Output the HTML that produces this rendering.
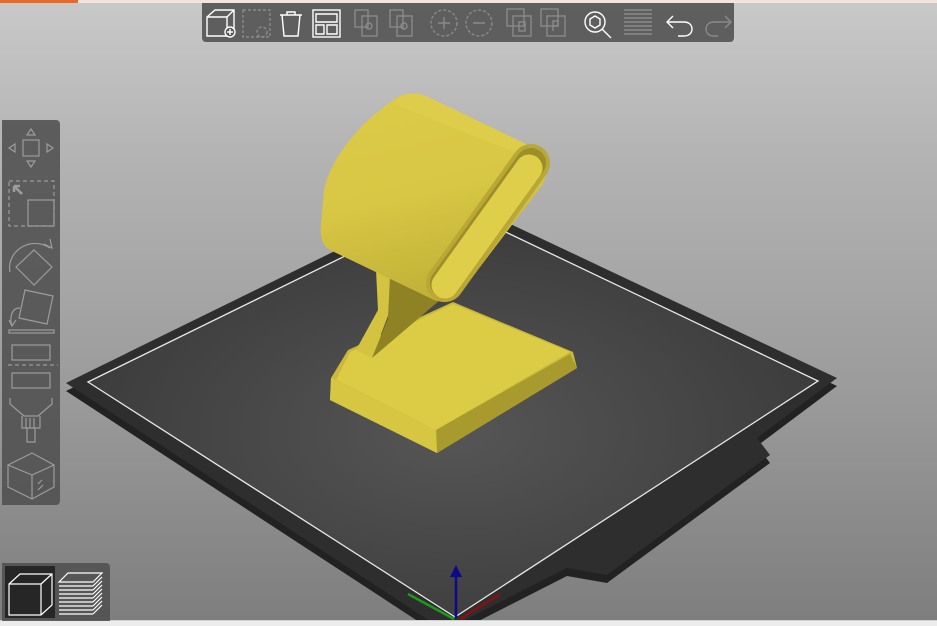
<!DOCTYPE html>
<html><head><meta charset="utf-8"><style>
html,body{margin:0;padding:0}
body{width:937px;height:625px;overflow:hidden;position:relative;background:linear-gradient(#c9c9c9 0px,#b4b4b4 150px,#9a9a9a 400px,#7e7e7e 620px);font-family:"Liberation Sans",sans-serif}
.tb{position:absolute;background:rgba(80,80,80,0.88)}
svg{position:absolute;left:0;top:0}
</style></head><body>
<div style="position:absolute;left:0;top:0;width:937px;height:3px;background:#f5e4dc"></div>
<div style="position:absolute;left:0;top:0;width:78px;height:3px;background:#e8692a"></div>

<svg width="937" height="625" viewBox="0 0 937 625">
<defs>
<radialGradient id="bed" cx="0.5" cy="0.55" r="0.6"><stop offset="0" stop-color="#565656"/><stop offset="1" stop-color="#383838"/></radialGradient>
<linearGradient id="ring" x1="0" y1="0" x2="0.25" y2="1"><stop offset="0" stop-color="#dccb47"/><stop offset="0.55" stop-color="#d8c744"/><stop offset="1" stop-color="#c2b238"/></linearGradient>
</defs>
<path d="M66,391 L449,203 L837,386 L757,446 L770,463 L607,583 L567,576 L455,633 L436,633 Z" fill="#222"/>
<path d="M66,383 L449,195 L837,378 L757,438 L770,455 L607,575 L567,568 L455,625 L436,625 Z" fill="#2e2e2e"/>
<path d="M88,382 L449,205 L818,381 L455,617 Z" fill="url(#bed)"/>
<path d="M88,382 L449,205 L818,381 L455,617 Z" fill="none" stroke="#e8e8e8" stroke-width="1.3"/>
<line x1="456" y1="618" x2="456" y2="572" stroke="#0a0a8a" stroke-width="2.5"/>
<path d="M450,577 L456,565 L462,577 Z" fill="#0a0a8a"/>
<line x1="454" y1="619" x2="408" y2="594" stroke="#1c9a1c" stroke-width="2.5"/>
<line x1="460" y1="619" x2="500" y2="594" stroke="#8a1010" stroke-width="2.5"/>

<path d="M348,350 L453,302 L573,352 L577,368 L437,453 L330,400 L331,378 Z" fill="#c9b83a"/>
<path d="M350,352 L453,304 L570,352 L436,430 L336,380 Z" fill="#dccb45"/>
<path d="M436,430 L570,354 L577,368 L437,453 Z" fill="#a89a2c"/>
<path d="M331,378 L436,430 L437,453 L330,400 Z" fill="#d6c642"/>
<path d="M376,270 L392,276 L394,300 L372,358 L356,350 L378,310 Z" fill="#d4c340"/>
<path d="M390,276 L440,292 L440,300 L372,358 L388,318 Z" fill="#8e8224"/>

<path d="M400,96 C410,92 418,93 428,97 L528,145 C548,155 552,170 540,188 L458,296 C450,304 440,303 430,298 L330,250 C322,245 320,238 321,225 L324,190 C330,160 360,120 400,96 Z" fill="url(#ring)"/>
<path d="M400,96 C410,92 418,93 428,97 L528,145 L515,152 C470,135 430,118 395,104 Z" fill="#e0cf4c" opacity="0.7"/>
<line x1="531" y1="163" x2="445" y2="283" stroke="#b9a835" stroke-width="38" stroke-linecap="round"/>
<line x1="531" y1="163" x2="445" y2="283" stroke="#9c8f28" stroke-width="30" stroke-linecap="round"/>
<line x1="529" y1="168" x2="445" y2="285" stroke="#dfce4a" stroke-width="27" stroke-linecap="round"/>
</svg>

<div style="position:absolute;left:0;top:620px;width:937px;height:5px;background:#ececec;border-top:1px solid #d0d0d0"></div>

<div class="tb" style="left:202px;top:3px;width:532px;height:39px;border-radius:0 0 4px 4px"></div>
<svg width="937" height="50" viewBox="0 0 937 50" style="z-index:2" fill="none" stroke-width="1.4">
<g stroke="#fff">
<path d="M207,17 L215,10 L234,10 L234,30 L227,36 L207,36 Z M207,17 L227,17 L227,36 M227,17 L234,10"/>
<circle cx="230" cy="32" r="5" fill="#555"/><path d="M227,32h6M230,29v6"/>
<path d="M280,15 h22 M287,15 v-3 h8 v3 M282,15 l2,21 h14 l2,-21"/>
<rect x="313" y="10" width="27" height="27"/><path d="M316,14 h21 v8 h-21 Z M316,25 h8 v9 h-8 Z M327,25 h10 v9 h-10 Z"/>
<circle cx="595" cy="22" r="10"/><path d="M602,29 l9,9 M595,16 l5,3 v6 l-5,3 l-5,-3 v-6 Z"/>
<path d="M668,22 h16 c5,0 8,3 8,7 c0,4 -3,7 -8,7 h-6 M673,16 l-6,6 l6,6"/>
</g>
<g stroke="#8a8a8a" stroke-dasharray="3,2"><rect x="243" y="10" width="27" height="27"/><circle cx="262" cy="32" r="5"/><circle cx="444" cy="23" r="13"/><circle cx="479" cy="23" r="13"/></g>
<g stroke="#8a8a8a">
<rect x="355" y="10" width="13" height="17"/><rect x="362" y="16" width="15" height="20"/><circle cx="369" cy="26" r="3"/>
<rect x="390" y="10" width="13" height="17"/><rect x="397" y="16" width="15" height="20"/><circle cx="404" cy="26" r="3"/>
<path d="M438,23h12M444,17v12M473,23h12"/>
<rect x="507" y="9" width="17" height="17"/><rect x="513" y="16" width="18" height="20"/><rect x="519" y="22" width="6" height="9"/>
<rect x="541" y="9" width="17" height="17"/><rect x="547" y="16" width="18" height="20"/><path d="M553,31v-10h5v5h-5"/>
<path d="M624,10h28M624,14h28M624,18h28M624,22h28M624,26h28M624,30h28M624,34h28"/>
<path d="M730,22 h-16 c-5,0 -8,3 -8,7 c0,4 3,7 8,7 h4 M725,16 l6,6 l-6,6"/>
</g>
</svg>

<div class="tb" style="left:2px;top:120px;width:58px;height:385px;border-radius:0 4px 4px 0"></div>
<svg width="70" height="625" viewBox="0 0 70 625" style="z-index:2" fill="none" stroke="#9c9c9c" stroke-width="1.2">
<rect x="23" y="140" width="16" height="16"/><path d="M27,135 l4,-6 l4,6 Z M27,161 l4,6 l4,-6 Z M15,144 l-6,4 l6,4 Z M47,144 l6,4 l-6,4 Z"/>
<rect x="9" y="181" width="45" height="45" stroke-dasharray="4,3"/><rect x="28" y="200" width="26" height="26"/><path d="M14,186 l8,8 M14,186 h6 M14,186 v6" stroke-width="2.5"/>
<path d="M10,272 C6,252 30,235 50,248 M44,244 l8,4 l-2,-9" /><path d="M34,250 l18,17 l-18,18 l-18,-18 Z"/>
<path d="M25,290 l28,6 l-6,28 l-28,-6 Z M20,308 c-10,0 -10,12 -8,18 M9,320 l3,6 l4,-6"/><rect x="9" y="330" width="45" height="3"/>
<rect x="12" y="345" width="38" height="15"/><path d="M8,365 h50" stroke-dasharray="4,3"/><rect x="12" y="373" width="38" height="15"/>
<path d="M10,398 v6 l14,12 h14 l14,-12 v-6 M22,416 v12 h18 v-12 M26,418v10M30,418v10M34,418v10 M27,428 v14 h8 v-14"/>
<path d="M8,465 l24,-12 l22,12 v22 l-22,12 l-24,-12 Z M8,465 l24,10 l22,-10 M32,475 v24 M38,484 l4,-4 M38,490 l5,-5"/>
</svg>

<div class="tb" style="left:2px;top:563px;width:108px;height:58px;border-radius:0 4px 0 0"></div>
<div style="position:absolute;left:5px;top:566px;width:50px;height:52px;background:#262626"></div>
<svg width="120" height="625" viewBox="0 0 120 625" style="z-index:2" fill="none" stroke="#fff" stroke-width="1.2">
<path d="M9,584 l11,-10 h32 v31 l-11,10 h-32 Z M9,584 h32 v31 M41,584 l11,-10"/>
<path d="M59,582 l9,-9 h34 l-9,9 Z"/>
<path d="M59,586h34M59,590h34M59,594h34M59,598h34M59,602h34M59,606h34M59,610h34M59,614h34M93,586l9,-9M93,590l9,-9M93,594l9,-9M93,598l9,-9M93,602l9,-9M93,606l9,-9M93,610l9,-9M93,614l9,-9"/>
</svg>
</body></html>
